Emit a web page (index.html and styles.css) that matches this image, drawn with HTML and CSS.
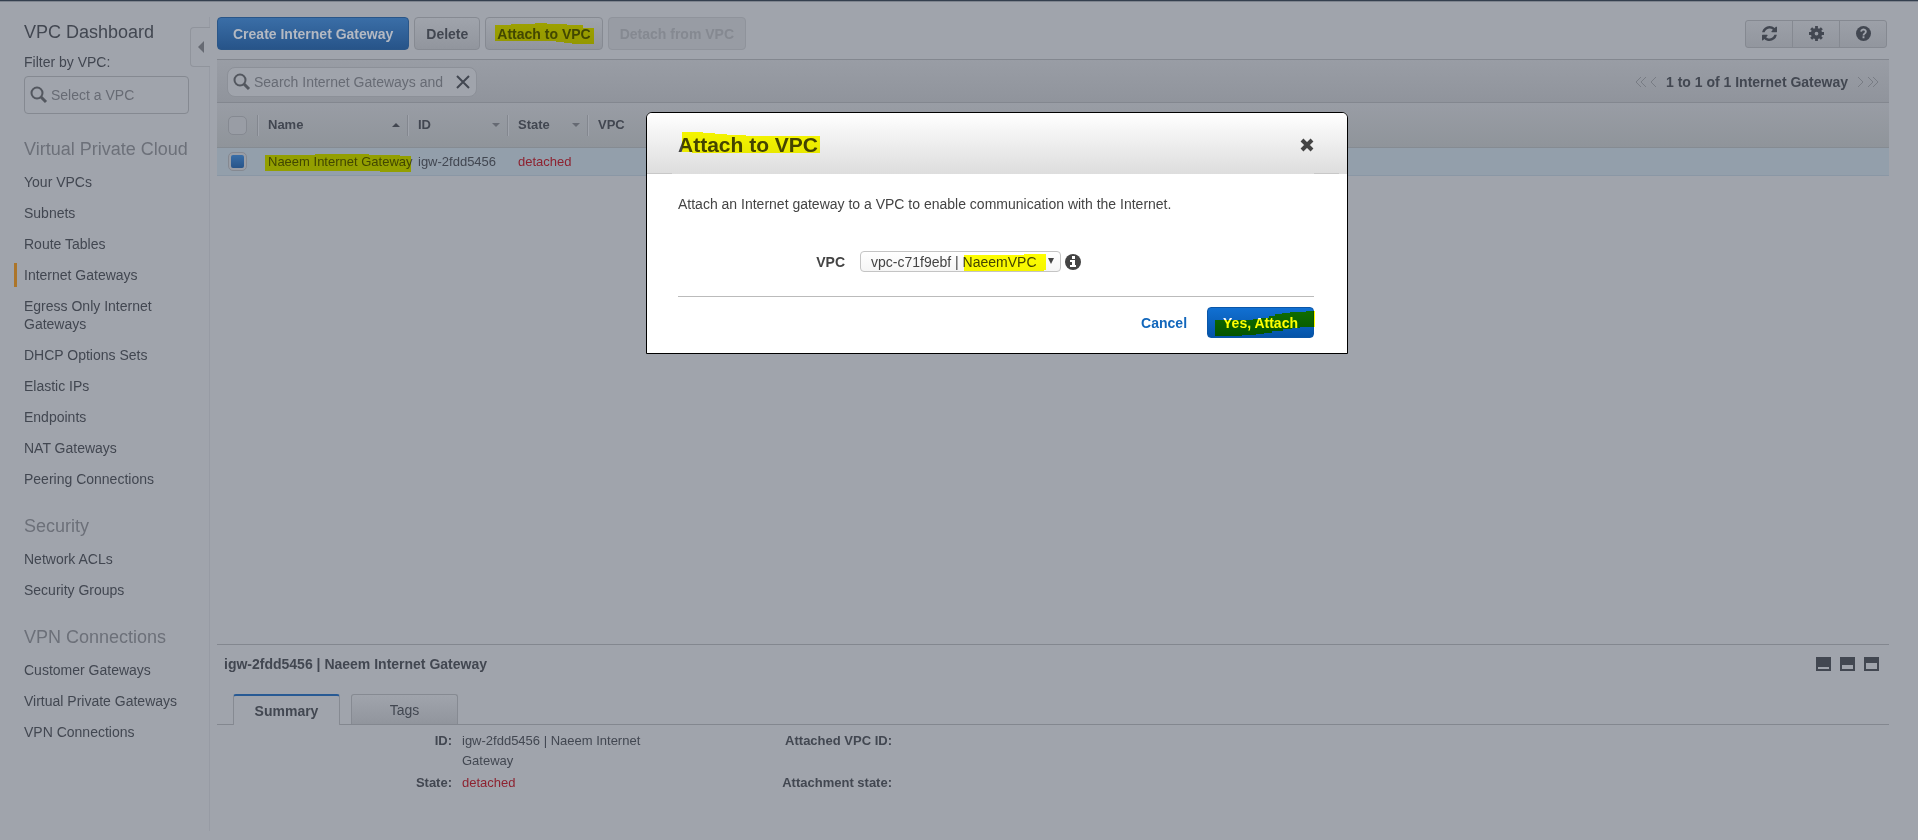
FILE: index.html
```html
<!DOCTYPE html>
<html lang="en">
<head>
    <meta charset="UTF-8">
    <meta name="viewport" content="width=device-width, initial-scale=1.0">
    <title>VPC Management Console</title>
    <link rel="stylesheet" href="styles.css">
</head>
<body>
    <div class="app">
        <nav class="sidebar">
            <h1 class="sidebar-title">VPC Dashboard</h1>
            <label class="filter-label" for="vpcFilter">Filter by VPC:</label>
            <div class="filter-box">
                <svg class="search-icon" viewBox="0 0 18 18"><circle cx="7" cy="7" r="5.5"/><path d="M11 11l5 5" class="handle"/></svg>
                <input type="text" id="vpcFilter" placeholder="Select a VPC">
            </div>

            <h2>Virtual Private Cloud</h2>
            <ul>
                <li><a href="#">Your VPCs</a></li>
                <li><a href="#">Subnets</a></li>
                <li><a href="#">Route Tables</a></li>
                <li class="active"><a href="#">Internet Gateways</a></li>
                <li><a href="#">Egress Only Internet Gateways</a></li>
                <li><a href="#">DHCP Options Sets</a></li>
                <li><a href="#">Elastic IPs</a></li>
                <li><a href="#">Endpoints</a></li>
                <li><a href="#">NAT Gateways</a></li>
                <li><a href="#">Peering Connections</a></li>
            </ul>

            <h2>Security</h2>
            <ul>
                <li><a href="#">Network ACLs</a></li>
                <li><a href="#">Security Groups</a></li>
            </ul>

            <h2>VPN Connections</h2>
            <ul>
                <li><a href="#">Customer Gateways</a></li>
                <li><a href="#">Virtual Private Gateways</a></li>
                <li><a href="#">VPN Connections</a></li>
            </ul>

            <button type="button" class="collapse" aria-label="Collapse">
                <svg viewBox="0 0 6 12"><path d="M6 0v12L0 6z"/></svg>
            </button>
        </nav>

        <main class="content">
            <div class="toolbar">
                <button type="button" class="btn primary">Create Internet Gateway</button>
                <button type="button" class="btn">Delete</button>
                <button type="button" class="btn">
                    <span class="marked">Attach to VPC
                        <svg class="marker marker-attach" viewBox="0 0 99 22" preserveAspectRatio="none"><path d="M0 2h16V1h24V0h12v1h20v1h16v3h11v16H77v-1h-8v-1h-8v-1H0z"/></svg>
                    </span>
                </button>
                <button type="button" class="btn" disabled>Detach from VPC</button>
                <div class="icon-group">
                    <button type="button" aria-label="Refresh">
                        <svg viewBox="0 0 1536 1536"><path d="M1511 928q0 5-1 7-64 268-268 434.500t-478 166.500q-146 0-282.500-55t-243.500-157l-129 129q-19 19-45 19t-45-19-19-45v-448q0-26 19-45t45-19h448q26 0 45 19t19 45-19 45l-137 137q71 66 161 102t187 36q134 0 250-65t186-179q11-17 53-117 8-23 30-23h192q13 0 22.500 9.500t9.500 22.500zm25-800v448q0 26-19 45t-45 19h-448q-26 0-45-19t-19-45 19-45l138-138q-148-137-349-137-134 0-250 65t-186 179q-11 17-53 117-8 23-30 23h-199q-13 0-22.500-9.500t-9.500-22.500v-7q65-268 270-434.500t480-166.500q146 0 284 55.500t245 156.500l130-129q19-19 45-19t45 19 19 45z"/></svg>
                    </button>
                    <button type="button" aria-label="Settings">
                        <svg viewBox="0 0 16 16"><circle cx="8" cy="8" r="4" fill="none" stroke="currentColor" stroke-width="4"/><path d="M8 0v3M8 13v3M0 8h3M13 8h3M2.300 2.300l2 2M11.700 11.700l2 2M2.300 13.700l2-2M11.700 4.300l2-2" stroke="currentColor" stroke-width="3"/></svg>
                    </button>
                    <button type="button" aria-label="Help">
                        <svg viewBox="0 0 16 16"><circle cx="8" cy="8" r="8"/><path d="M5.500 6a2.500 2.300 0 1 1 3.800 2Q8 8.700 8 10M8 11v2" fill="none" stroke="#a0a4ac" stroke-width="2"/></svg>
                    </button>
                </div>
            </div>

            <div class="searchbar">
                <div class="search-box">
                    <svg class="search-icon" viewBox="0 0 18 18"><circle cx="7" cy="7" r="5.500"/><path d="M11 11l5 5" class="handle"/></svg>
                    <input type="text" aria-label="Search" placeholder="Search Internet Gateways and">
                    <button type="button" aria-label="Clear">
                        <svg viewBox="0 0 14 14"><path d="M1 1l12 12M13 1L1 13"/></svg>
                    </button>
                </div>
                <div class="pager">
                    <svg viewBox="0 0 22 12"><path d="M6 1L1 6l5 5M11 1L6 6l5 5M21 1l-5 5 5 5"/></svg>
                    <span>1 to 1 of 1 Internet Gateway</span>
                    <svg viewBox="0 0 22 12"><path d="M1 1l5 5-5 5M11 1l5 5-5 5M16 1l5 5-5 5"/></svg>
                </div>
            </div>

            <table class="grid">
                <colgroup>
                    <col class="col-check">
                    <col class="col-name">
                    <col class="col-id">
                    <col class="col-state">
                    <col>
                </colgroup>
                <thead>
                    <tr>
                        <th><input type="checkbox" aria-label="Select all"></th>
                        <th><div class="head">Name <svg class="asc" viewBox="0 0 8 4"><path d="M0 4l4-4 4 4z"/></svg></div></th>
                        <th><div class="head">ID <svg viewBox="0 0 8 4"><path d="M0 0h8L4 4z"/></svg></div></th>
                        <th><div class="head">State <svg viewBox="0 0 8 4"><path d="M0 0h8L4 4z"/></svg></div></th>
                        <th><div class="head">VPC</div></th>
                    </tr>
                </thead>
                <tbody>
                    <tr>
                        <td><input type="checkbox" aria-label="Select row" checked></td>
                        <td>
                            <div class="marked">Naeem Internet Gateway
                                <svg class="marker marker-name" viewBox="0 0 146 18" preserveAspectRatio="none"><path d="M0 1h50V0h54v1h31v1h11v16h-31v-1H0z"/></svg>
                            </div>
                        </td>
                        <td>igw-2fdd5456</td>
                        <td class="detached">detached</td>
                        <td></td>
                    </tr>
                </tbody>
            </table>

            <section class="details">
                <div class="details-head">
                    <h3>igw-2fdd5456 | Naeem Internet Gateway</h3>
                    <div class="pane-buttons">
                        <button type="button" aria-label="Minimize"><svg viewBox="0 0 15 14"><path d="M0 0h15v14H0zM2 10v2h11v-2z"/></svg></button>
                        <button type="button" aria-label="Half"><svg viewBox="0 0 15 14"><path d="M0 0h15v14H0zM2 8v4h11V8z"/></svg></button>
                        <button type="button" aria-label="Maximize"><svg viewBox="0 0 15 14"><path d="M0 0h15v14H0zM2 6v6h11V6z"/></svg></button>
                    </div>
                </div>
                <div class="tabs">
                    <button type="button" class="tab selected">Summary</button>
                    <button type="button" class="tab">Tags</button>
                </div>
                <dl>
                    <dt>ID:</dt>
                    <dd>igw-2fdd5456 | Naeem Internet Gateway</dd>
                    <dt>Attached VPC ID:</dt>
                    <dd></dd>
                    <dt>State:</dt>
                    <dd class="detached">detached</dd>
                    <dt>Attachment state:</dt>
                    <dd></dd>
                </dl>
            </section>
        </main>
    </div>

    <div class="overlay">
        <form class="modal">
            <div class="modal-head">
                <h2 class="marked">Attach to VPC
                    <svg class="marker marker-title" viewBox="0 0 138 22" preserveAspectRatio="none"><path d="M0 0h21v1h12v1h12v1h19v1h74v17H10v-1H0z"/></svg>
                </h2>
                <button type="button" class="close" aria-label="Close">
                    <svg viewBox="0 0 14 14"><path d="M2 2l10 10M12 2L2 12"/></svg>
                </button>
            </div>
            <div class="modal-body">
                <p>Attach an Internet gateway to a VPC to enable communication with the Internet.</p>
                <div class="field">
                    <label for="vpc">VPC</label>
                    <div class="marked select-wrap">
                        <select id="vpc">
                            <option>vpc-c71f9ebf | NaeemVPC</option>
                        </select>
                        <svg class="caret" viewBox="0 0 6 6"><path d="M0 0h6L3 6z"/></svg>
                        <svg class="marker marker-select" viewBox="0 0 82 17" preserveAspectRatio="none"><path d="M0 1h60V0h22v16h-2v1H0z"/></svg>
                    </div>
                    <svg class="info" viewBox="0 0 16 16"><circle cx="8" cy="8" r="8"/><path d="M7 2h3v3H7zM5 6h5v5h1v2H5v-2h2V8H5z" fill="#fff"/></svg>
                </div>
                <div class="modal-foot">
                    <a href="#">Cancel</a>
                    <button type="submit" class="btn attach">
                        <span class="marked">Yes, Attach
                            <svg class="marker marker-yes" viewBox="0 0 100 25" preserveAspectRatio="none"><path d="M0 9h38V8h8V7h8V5h6V3h7V2h8V1h16V0h9v16h-15v1h-8v1h-9v2h-11v2h-8v1h-8v1H27v1H0z"/></svg>
                        </span>
                    </button>
                </div>
            </div>
        </form>
    </div>
</body>
</html>
```
FILE: styles.css
```css
* {
    box-sizing: border-box;
}

body {
    margin: 0;
    background-color: #a0a4ac;
    color: #424751;
    font-family: "Liberation Sans", Arial, sans-serif;
    font-size: 14px;
    line-height: 18px;
}

button, input, select {
    font: inherit;
    color: inherit;
}

button {
    cursor: pointer;
}

svg {
    display: block;
    fill: currentColor;
}

/* page frame */
.app {
    display: flex;
    min-height: 100vh;
    padding: 16px 29px 9px 0;
    border-top: 1px solid #343f4e;
    box-shadow: inset 0 1px #7f858f;
}

.sidebar {
    position: relative;
    width: 210px;
    margin-right: 7px;
    padding: 5px 20px 0 24px;
    border-right: 1px solid #979ba4;
}

.sidebar-title {
    margin: 0 0 11px;
    font-size: 18px;
    line-height: 20px;
    font-weight: normal;
}

.filter-label {
    display: block;
    margin-bottom: 5px;
}

.filter-box {
    display: flex;
    align-items: center;
    gap: 3px;
    height: 38px;
    padding: 0 5px;
    border: 1px solid #858991;
    border-radius: 4px;
}

.filter-box input {
    flex: 1;
    min-width: 0;
    padding: 0;
    border: none;
    background: none;
}

input::placeholder {
    color: #676b74;
    opacity: 1;
}

.search-icon {
    flex: none;
    width: 18px;
    height: 18px;
    fill: none;
    stroke: #53575f;
    stroke-width: 2;
}

.search-icon .handle {
    stroke-width: 3;
}

.sidebar h2 {
    margin: 25px -10px 11px 0;
    color: #6c7079;
    font-size: 18px;
    line-height: 20px;
    font-weight: normal;
}

.sidebar ul {
    margin: 0;
    padding: 0;
    list-style: none;
}

.sidebar li {
    margin: 0 0 7px -10px;
    padding: 3px 0 3px 7px;
    border-left: 3px solid transparent;
}

.sidebar li.active {
    border-left-color: #ac752a;
}

.sidebar a {
    color: inherit;
    text-decoration: none;
}

.collapse {
    position: absolute;
    top: 10px;
    right: -1px;
    width: 20px;
    height: 40px;
    padding: 0 0 0 7px;
    border: 1px solid #90949c;
    border-right: none;
    border-radius: 4px 0 0 4px;
    background-color: #a0a4ac;
    color: #666a73;
}

.collapse svg {
    width: 6px;
    height: 12px;
}

.content {
    display: flex;
    flex: 1;
    flex-direction: column;
    min-width: 0;
}

/* toolbar */
.toolbar {
    display: flex;
    gap: 5px;
    margin-bottom: 9px;
}

.btn {
    height: 33px;
    padding: 0 11px;
    border: 1px solid #868a92;
    border-radius: 4px;
    background: linear-gradient(#a0a4ac, #91959d);
    font-weight: bold;
}

.btn.primary {
    padding: 0 15px;
    border-color: #2a5688;
    background: linear-gradient(#3a6ea7, #275489);
    color: #b4b9c2;
}

.btn:disabled {
    border-color: #8f939b;
    background: #989ca4;
    color: #858991;
}

.icon-group {
    display: flex;
    align-self: center;
    margin-left: auto;
    margin-right: 2px;
}

.icon-group button {
    display: flex;
    align-items: center;
    justify-content: center;
    width: 48px;
    height: 28px;
    margin-left: -1px;
    padding: 0;
    border: 1px solid #858991;
    background: linear-gradient(#9ca0a8, #92969e);
}

.icon-group button:first-child {
    border-radius: 3px 0 0 3px;
}

.icon-group button:last-child {
    border-radius: 0 3px 3px 0;
}

.icon-group svg {
    width: 15px;
    height: 15px;
}

/* search and paging */
.searchbar {
    display: flex;
    align-items: center;
    justify-content: space-between;
    height: 44px;
    padding: 2px 10px 0;
    border-top: 1px solid #83878f;
    border-bottom: 1px solid #83878f;
    background: linear-gradient(#999da5, #90949c);
}

.search-box {
    display: flex;
    align-items: center;
    gap: 3px;
    width: 250px;
    height: 30px;
    padding: 0 6px 0 5px;
    border: 1px solid #8c9098;
    border-radius: 8px;
    background-color: #a0a4ac;
}

.search-box input {
    flex: 1;
    min-width: 0;
    padding: 0;
    border: none;
    background: none;
}

.search-box button {
    padding: 0;
    border: none;
    background: none;
}

.search-box button svg {
    width: 14px;
    height: 14px;
    margin-left: 4px;
    stroke: currentColor;
    stroke-width: 2;
}

.pager {
    display: flex;
    align-items: center;
    gap: 4px;
    font-weight: bold;
}

.pager span {
    min-width: 192px;
    text-align: center;
}

.pager svg {
    width: 22px;
    height: 12px;
    fill: none;
    stroke: #787c84;
}

/* gateway list */
.grid {
    width: 100%;
    table-layout: fixed;
    border-collapse: separate;
    border-spacing: 0;
    font-size: 13px;
    text-align: left;
}

.col-check {
    width: 40px;
}

.col-name {
    width: 150px;
}

.col-id {
    width: 100px;
}

.col-state {
    width: 80px;
}

.grid th {
    height: 45px;
    padding: 0;
    border-bottom: 1px solid #858b92;
}

.grid thead {
    background: linear-gradient(#999da5, #8f949a);
}

.head {
    display: flex;
    align-items: center;
    justify-content: space-between;
    height: 21px;
    padding: 0 7px 0 10px;
    border-left: 1px solid #83878f;
    box-shadow: inset 1px 0 #a0a4ac;
}

.head svg {
    width: 8px;
    height: 4px;
    color: #666a73;
}

.head .asc {
    color: #424751;
}

.grid td {
    height: 28px;
    padding: 0 0 0 11px;
    border-bottom: 1px solid #8a97a5;
    white-space: nowrap;
}

.grid tbody tr {
    background-color: #939fab;
}

.grid th:first-child, .grid td:first-child {
    padding-left: 11px;
}

.grid input {
    display: block;
    appearance: none;
    width: 19px;
    height: 19px;
    margin: 0;
    border: 1px solid #858991;
    border-radius: 5px;
    background-color: #999da5;
}

.grid input:checked {
    padding: 2px;
    background: linear-gradient(#3a6ea7, #275489) content-box, #9a9ea6;
}

.detached {
    color: #8d2230;
}

/* details pane */
.details {
    min-height: 187px;
    margin-top: auto;
    border-top: 1px solid #83878f;
}

.details-head {
    display: flex;
    align-items: center;
    justify-content: space-between;
    height: 38px;
    padding: 0 10px 0 7px;
}

.details h3 {
    margin: 0;
    font-size: 14px;
}

.pane-buttons {
    display: flex;
    gap: 9px;
}

.pane-buttons button {
    padding: 0;
    border: none;
    background: none;
}

.pane-buttons svg {
    width: 15px;
    height: 14px;
    fill-rule: evenodd;
}

.tabs {
    display: flex;
    gap: 11px;
    margin-top: 11px;
    padding-left: 16px;
    border-bottom: 1px solid #83878f;
}

.tab {
    width: 107px;
    height: 30px;
    padding: 0;
    border: 1px solid #868a92;
    border-bottom: none;
    border-radius: 3px 3px 0 0;
    background: linear-gradient(#a0a4ac, #91959d);
}

.tab.selected {
    height: 31px;
    margin-bottom: -1px;
    border-top: 2px solid #285a94;
    background: #a0a4ac;
    font-weight: bold;
}

.details dl {
    display: grid;
    grid-template-columns: 235px 190px 230px 190px;
    column-gap: 10px;
    row-gap: 2px;
    margin: 6px 0 0;
    font-size: 13px;
    line-height: 20px;
}

.details dt {
    font-weight: bold;
    text-align: right;
}

.details dd {
    margin: 0;
}

/* attach dialog */
.overlay {
    position: fixed;
    inset: 0;
    display: flex;
    align-items: flex-start;
    justify-content: center;
    padding: 112px 0 0 76px;
}

.modal {
    width: 702px;
    border: 1px solid #000;
    border-radius: 6px 6px 0 0;
    background-color: #fff;
    color: #444;
}

.modal-head {
    display: flex;
    align-items: center;
    justify-content: space-between;
    height: 61px;
    padding: 2px 33px 0 31px;
    border-radius: 5px 5px 0 0;
    background:
        linear-gradient(#c8c8c8, #c8c8c8) left bottom / 25px 1px no-repeat,
        linear-gradient(#c8c8c8, #c8c8c8) right 8px bottom / 25px 1px no-repeat,
        linear-gradient(#fff, #ddd);
}

.modal-head h2 {
    margin: 0;
    font-size: 21px;
    line-height: 24px;
}

.close {
    padding: 0;
    border: none;
    background: none;
}

.close svg {
    width: 14px;
    height: 14px;
    stroke: currentColor;
    stroke-width: 4;
}

.modal-body {
    padding: 21px 33px 15px 31px;
}

.modal-body p {
    margin: 0;
}

.field {
    display: flex;
    align-items: center;
    margin: 38px 0 24px;
}

.field label {
    width: 167px;
    margin-right: 15px;
    font-weight: bold;
    text-align: right;
}

.select-wrap {
    width: 201px;
}

.field select {
    display: block;
    appearance: none;
    width: 100%;
    height: 21px;
    padding: 0 10px;
    border: 1px solid #c4c4c4;
    border-radius: 4px;
    background: linear-gradient(#fff, #f5f5f5);
}

.caret {
    position: absolute;
    top: 7px;
    right: 7px;
    width: 6px;
    height: 6px;
}

.info {
    width: 16px;
    height: 16px;
    margin-left: 4px;
}

.modal-foot {
    display: flex;
    align-items: center;
    justify-content: flex-end;
    gap: 20px;
    padding-top: 10px;
    border-top: 1px solid #bbb;
}

.modal-foot a {
    color: #1166bb;
    font-weight: bold;
    text-decoration: none;
}

.btn.attach {
    height: 31px;
    padding: 0 15px;
    border-color: #0a56a8;
    background: linear-gradient(#1170d2, #0453a8);
    color: #fff;
}

/* highlighter strokes drawn over a label */
.marked {
    position: relative;
}

.marker {
    position: absolute;
    fill: #ff0;
    mix-blend-mode: multiply;
    pointer-events: none;
}

.marker-attach {
    top: -3px;
    left: -2px;
    width: 99px;
    height: 22px;
}

.marker-name {
    top: 1px;
    left: -3px;
    width: 146px;
    height: 18px;
}

.marker-title {
    top: -1px;
    left: 4px;
    width: 138px;
    height: 22px;
}

.marker-select {
    top: 3px;
    left: 104px;
    width: 82px;
    height: 17px;
}

.marker-yes {
    top: -4px;
    left: -8px;
    width: 100px;
    height: 25px;
}
```
